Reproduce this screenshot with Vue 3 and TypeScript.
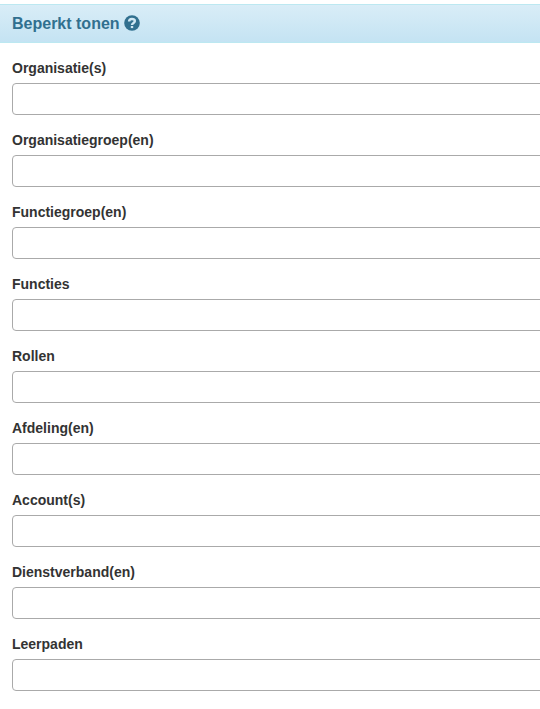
<script setup lang="ts">
import { reactive } from 'vue'

interface Field {
  id: string
  label: string
  value: string
}

const fields = reactive<Field[]>([
  { id: 'organisaties', label: 'Organisatie(s)', value: '' },
  { id: 'organisatiegroepen', label: 'Organisatiegroep(en)', value: '' },
  { id: 'functiegroepen', label: 'Functiegroep(en)', value: '' },
  { id: 'functies', label: 'Functies', value: '' },
  { id: 'rollen', label: 'Rollen', value: '' },
  { id: 'afdelingen', label: 'Afdeling(en)', value: '' },
  { id: 'accounts', label: 'Account(s)', value: '' },
  { id: 'dienstverbanden', label: 'Dienstverband(en)', value: '' },
  { id: 'leerpaden', label: 'Leerpaden', value: '' },
])
</script>

<template>
  <section class="panel">
    <header class="panel-heading">
      <h2 class="panel-title">Beperkt tonen</h2>
      <svg class="help-icon" viewBox="0 0 16 16" aria-hidden="true">
        <circle class="help-disc" cx="8" cy="8" r="7.8" />
        <path class="help-hook" d="M5.1 6.6C5.1 4.8 6.3 4 8 4C9.8 4 10.9 4.8 10.9 6.1C10.9 7.9 8 7.9 8 10" />
        <rect class="help-dot" x="6.8" y="11" width="2.4" height="2.1" />
      </svg>
    </header>
    <form class="panel-body" @submit.prevent>
      <div v-for="field in fields" :key="field.id" class="form-group">
        <label class="field-label" :for="field.id">{{ field.label }}</label>
        <input :id="field.id" v-model="field.value" class="field-input" type="text" autocomplete="off" />
      </div>
    </form>
  </section>
</template>

<style>
body {
  background: #fff;
  overflow-x: hidden;
}
</style>

<style scoped>
.panel {
  padding-top: 4px;
  color: #333;
  font-family: "Liberation Sans", Arial, sans-serif;
  font-size: 14px;
  line-height: 20px;
}

.panel-heading {
  display: flex;
  align-items: flex-start;
  gap: 4px;
  padding: 10px 12px 9px;
  border-top: 1px solid #bce8f1;
  border-bottom: 1px solid #bce8f1;
  background: linear-gradient(to bottom, #d9edf7, #c4e3f3);
  color: #31708f;
}

.panel-title {
  margin: 0;
  font-size: 16px;
  font-weight: 700;
  line-height: 18px;
}

.help-icon {
  width: 16px;
  height: 16px;
}

.help-disc {
  fill: #31708f;
}

.help-hook {
  fill: none;
  stroke: #d0e8f4;
  stroke-width: 2.4;
}

.help-dot {
  fill: #d0e8f4;
}

/* The fields run on past the right edge of the window. */
.panel-body {
  display: flex;
  flex-direction: column;
  gap: 15px;
  margin-right: -12px;
  padding: 15px 0 18px 12px;
}

.form-group {
  display: flex;
  flex-direction: column;
  gap: 5px;
}

.field-label {
  align-self: flex-start;
  font-weight: 700;
}

.field-input {
  box-sizing: border-box;
  width: 100%;
  height: 32px;
  padding: 4px 8px;
  border: 1px solid #aaa;
  border-radius: 4px;
  background: #fff;
  color: inherit;
  font: inherit;
}
</style>
